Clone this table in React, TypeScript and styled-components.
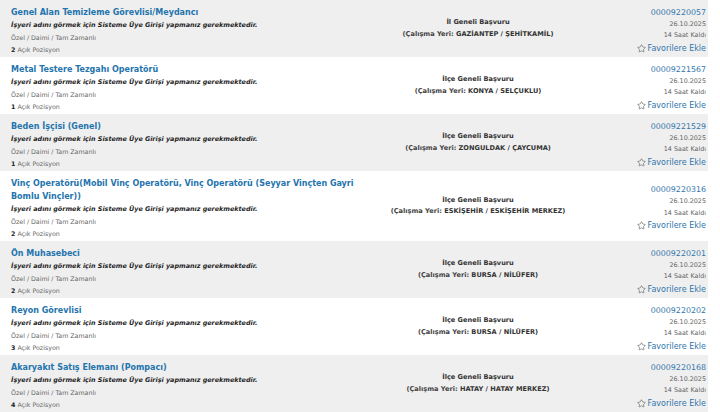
import React from 'react';
import styled, { createGlobalStyle } from 'styled-components';
import { Star } from 'lucide-react';

const GlobalStyle = createGlobalStyle`
  html, body {
    margin: 0;
    padding: 0;
    background: #fff;
  }
  body {
    font-family: "DejaVu Sans", Verdana, sans-serif;
    color: #333;
  }
`;

type Job = {
  title: string;
  positions: number;
  scope: string;
  city: string;
  district: string;
  id: string;
};

const jobs: Job[] = [
  { title: 'Genel Alan Temizleme Görevlisi/Meydancı', positions: 2, scope: 'İl Geneli Başvuru', city: 'GAZİANTEP', district: 'ŞEHİTKAMİL', id: '00009220057' },
  { title: 'Metal Testere Tezgahı Operatörü', positions: 1, scope: 'İlçe Geneli Başvuru', city: 'KONYA', district: 'SELÇUKLU', id: '00009221567' },
  { title: 'Beden İşçisi (Genel)', positions: 1, scope: 'İlçe Geneli Başvuru', city: 'ZONGULDAK', district: 'ÇAYCUMA', id: '00009221529' },
  { title: 'Vinç Operatörü(Mobil Vinç Operatörü, Vinç Operatörü (Seyyar Vinçten Gayri Bomlu Vinçler))', positions: 2, scope: 'İlçe Geneli Başvuru', city: 'ESKİŞEHİR', district: 'ESKİŞEHİR MERKEZ', id: '00009220316' },
  { title: 'Ön Muhasebeci', positions: 2, scope: 'İlçe Geneli Başvuru', city: 'BURSA', district: 'NİLÜFER', id: '00009220201' },
  { title: 'Reyon Görevlisi', positions: 3, scope: 'İlçe Geneli Başvuru', city: 'BURSA', district: 'NİLÜFER', id: '00009220202' },
  { title: 'Akaryakıt Satış Elemanı (Pompacı)', positions: 4, scope: 'İlçe Geneli Başvuru', city: 'HATAY', district: 'HATAY MERKEZ', id: '00009220168' },
];

const List = styled.div`
  width: 708px;
  display: flex;
  flex-direction: column;
`;

const Row = styled.div<{ $odd: boolean }>`
  display: grid;
  grid-template-columns: 380px 196px 1fr;
  background: ${({ $odd }) => ($odd ? '#efefef' : '#ffffff')};
`;

const MainCell = styled.div`
  padding: 5px 10px 1px 11px;
  display: flex;
  flex-direction: column;
`;

const Title = styled.a`
  font-size: 8px;
  line-height: 13px;
  font-weight: bold;
  color: #2474ad;
  text-decoration: none;
  padding-top: 1px;
`;

const Notice = styled.div`
  font-size: 6.4px;
  line-height: 13px;
  font-weight: bold;
  font-style: italic;
  color: #1e1e1e;
`;

const Meta = styled.div`
  font-size: 6.3px;
  line-height: 12px;
  color: #666;
`;

const Count = styled.b`
  color: #222;
`;

const PlaceCell = styled.div`
  display: flex;
  flex-direction: column;
  justify-content: center;
  align-items: center;
  text-align: center;
  font-size: 6.6px;
  line-height: 11.5px;
  font-weight: bold;
  color: #333;
`;

const PlaceLabel = styled.span`
  color: #444;
`;

const SideCell = styled.div`
  display: flex;
  flex-direction: column;
  justify-content: center;
  align-items: flex-end;
  padding-right: 2px;
  padding-top: 4px;
`;

const JobId = styled.a`
  font-size: 7.9px;
  line-height: 12px;
  color: #2f75ab;
  text-decoration: none;
`;

const SideMeta = styled.div<{ $size: number }>`
  font-size: ${({ $size }) => $size}px;
  line-height: 11.5px;
  color: #666;
`;

const FavLink = styled.a`
  display: flex;
  align-items: center;
  gap: 2px;
  font-size: 8px;
  line-height: 13px;
  color: #2f75ab;
  text-decoration: none;
  svg {
    color: #555;
  }
`;

export default function App() {
  return (
    <>
      <GlobalStyle />
      <List>
        {jobs.map((job, i) => (
          <Row key={job.id} $odd={i % 2 === 0}>
            <MainCell>
              <Title href="#">{job.title}</Title>
              <Notice>İşyeri adını görmek için Sisteme Üye Girişi yapmanız gerekmektedir.</Notice>
              <Meta>Özel / Daimi / Tam Zamanlı</Meta>
              <Meta>
                <Count>{job.positions}</Count> Açık Pozisyon
              </Meta>
            </MainCell>
            <PlaceCell>
              <div>{job.scope}</div>
              <div>
                <PlaceLabel>(Çalışma Yeri: </PlaceLabel>
                {job.city} / {job.district})
              </div>
            </PlaceCell>
            <SideCell>
              <JobId href="#">{job.id}</JobId>
              <SideMeta $size={6.4}>26.10.2025</SideMeta>
              <SideMeta $size={6.4}>14 Saat Kaldı</SideMeta>
              <FavLink href="#">
                <Star size={9} strokeWidth={1.6} />
                Favorilere Ekle
              </FavLink>
            </SideCell>
          </Row>
        ))}
      </List>
    </>
  );
}
